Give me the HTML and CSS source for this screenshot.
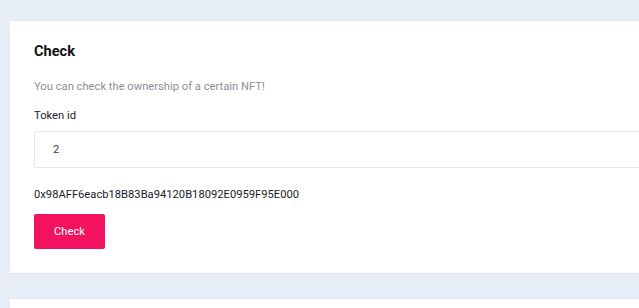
FILE: index.html
```html
<!DOCTYPE html>
<html>
<head>
<meta charset="utf-8">
<link rel="stylesheet" href="styles.css">
</head>
<body>
<div class="page">
  <section class="card">
    <h2 class="title">Check</h2>
    <p class="desc">You can check the ownership of a certain NFT!</p>
    <label class="label">Token id</label>
    <div class="input">2</div>
    <p class="address">0x98AFF6eacb18B83Ba94120B18092E0959F95E000</p>
    <button class="btn">Check</button>
  </section>
  <section class="card card-next"></section>
</div>
</body>
</html>
```

FILE: styles.css
```css
html, body {
  margin: 0;
  padding: 0;
  background: #e8eef8;
  font-family: Roboto, "Noto Sans", sans-serif;
  overflow: hidden;
}
.page {
  padding: 20px 0 0 10px;
  display: flex;
  flex-direction: column;
  gap: 24px;
}
.card {
  background: #fff;
  border-top: 1px solid #e3e7ef;
  border-bottom: 1px solid #e3e7ef;
  padding: 21px 0 24px 24px;
  width: 700px;
  display: flex;
  flex-direction: column;
  align-items: flex-start;
}
.card-next {
  height: 40px;
  padding: 0;
}
.title {
  margin: 0;
  font-size: 14.6px;
  font-weight: 700;
  color: #111;
  line-height: 18px;
}
.desc {
  margin: 20px 0 0;
  font-size: 11.2px;
  line-height: 14px;
  color: #8a8f99;
}
.label {
  margin-top: 15px;
  font-size: 11.2px;
  line-height: 14px;
  color: #1b1b1f;
}
.input {
  margin-top: 8px;
  width: 660px;
  height: 35px;
  border: 1px solid #e3e8f1;
  border-radius: 2px;
  padding-left: 18px;
  font-size: 11.2px;
  line-height: 35px;
  color: #3a3d44;
  box-sizing: content-box;
}
.address {
  margin: 20px 0 0;
  font-size: 11.2px;
  line-height: 14px;
  color: #1b1b1f;
}
.btn {
  margin-top: 12px;
  width: 71px;
  height: 35px;
  border: none;
  border-radius: 2px;
  background: #f31260;
  color: #fff;
  font-family: Roboto, sans-serif;
  font-size: 11.2px;
  padding: 0;
}
```
